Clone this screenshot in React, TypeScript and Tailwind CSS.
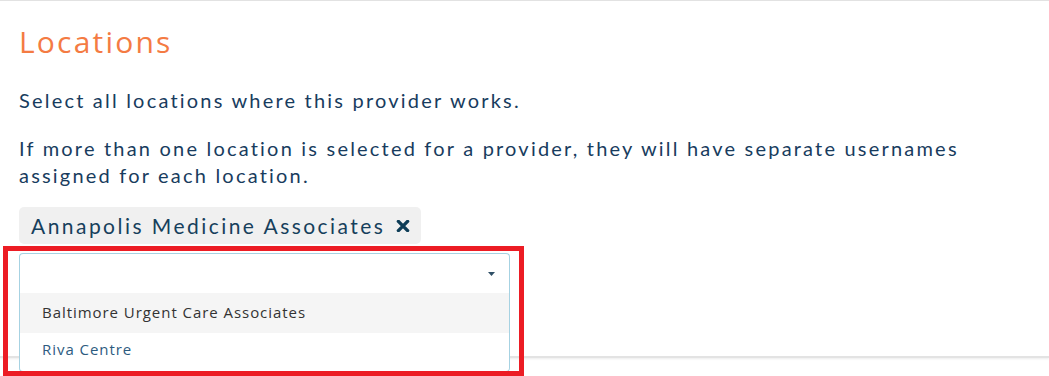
const locations = ["Baltimore Urgent Care Associates", "Riva Centre"];

function RemoveIcon() {
  return (
    <svg viewBox="0 0 14 12" className="h-[12px] w-[14px]" aria-hidden>
      <path
        d="M2.4 1.4 L11.6 10.6 M11.6 1.4 L2.4 10.6"
        stroke="#0e3d57"
        strokeWidth="3.4"
        strokeLinecap="round"
      />
    </svg>
  );
}

function Caret() {
  return (
    <svg viewBox="0 0 7 4" className="h-[4px] w-[7px]" aria-hidden>
      <polygon points="0,0 7,0 3.5,4" fill="#2f4f66" />
    </svg>
  );
}

export default function App() {
  return (
    <div className="relative h-[376px] w-full overflow-hidden bg-white">
      {/* Card */}
      <div className="h-[358px] border-t border-[#e2e2e2] border-b-2 border-b-[#e3e3e3] bg-white pl-[19px] pr-5 pt-[23px] shadow-[0_1px_2px_rgba(0,0,0,0.08)]">
        <h2
          className="text-[30px] leading-[36px] text-[#f47b43] tracking-[2.2px]"
          style={{ fontFamily: '"Open Sans", sans-serif' }}
        >
          Locations
        </h2>

        <div
          className="mt-[27px] text-[20px] leading-[27px] tracking-[0.11em] text-[#183c5e]"
          style={{ fontFamily: "Lato, sans-serif" }}
        >
          <p>Select all locations where this provider works.</p>
          <p className="mt-[21px]">
            If more than one location is selected for a provider, they will have separate usernames
            assigned for each location.
          </p>

          {/* Selected chip */}
          <div className="mt-[18px] inline-flex h-[37px] items-center gap-[11px] rounded-[5px] bg-[#f0f0f0] pl-[12px] pr-[11px] text-[21px] leading-[27px] tracking-[0.117em] text-[#163f5c]">
            <span>Annapolis Medicine Associates</span>
            <RemoveIcon />
          </div>
        </div>

        {/* Open select */}
        <div className="relative mt-[9px] w-[491px]">
          <div className="flex h-[40px] items-center justify-end rounded-t-[4px] border border-b-0 border-[#a6d2e2] bg-white pr-[14px]">
            <Caret />
          </div>
          <ul
            className="absolute left-0 right-0 top-[40px] rounded-b-[4px] border border-t-0 border-[#a6d2e2] bg-white text-[15px] leading-[20px] tracking-[0.95px]"
            style={{ fontFamily: '"Open Sans", sans-serif' }}
          >
            <li className="h-[40px] bg-[#f5f5f5] pl-[22px] pt-[9px] text-[#333333]">{locations[0]}</li>
            <li className="h-[38px] pl-[22px] pt-[6px] text-[#2d5b7f]">{locations[1]}</li>
          </ul>
        </div>
      </div>

      {/* Highlight annotation */}
      <div className="pointer-events-none absolute left-[3px] top-[246px] h-[130px] w-[521px] border-[5px] border-[#ec1c24]" />
    </div>
  );
}
